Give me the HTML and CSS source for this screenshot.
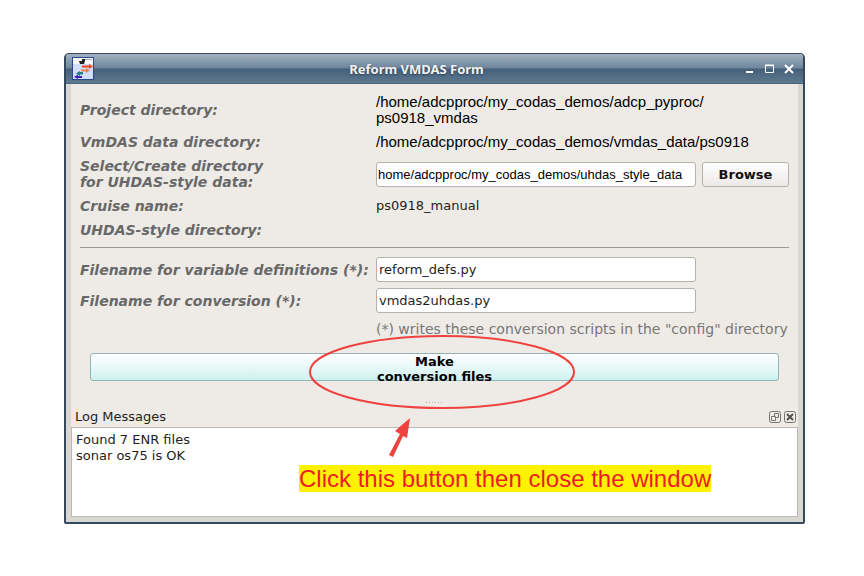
FILE: index.html
```html
<!DOCTYPE html>
<html lang="en">
<head>
    <meta charset="UTF-8">
    <meta name="viewport" content="width=device-width, initial-scale=1.0">
    <title>Reform VMDAS Form</title>
    <link rel="stylesheet" href="styles.css">
</head>
<body>
    <div class="window">
        <header class="titlebar">
            <svg class="app-icon" width="22" height="23" viewBox="0 0 22 23">
                <rect x="0.5" y="0.5" width="21" height="22" fill="#f8faff" stroke="#264c8c"/>
                <rect x="1" y="7" width="20" height="15" fill="#d3dcfb"/>
                <path d="M7 4h3V2h3v2l-1 3H8z" fill="#222"/>
                <path d="M13 2.500h7" stroke="#aaa"/>
                <path d="M10 8.500h7V7l4 2.500-4 2.500v-1.500h-7z" fill="#f8440c"/>
                <path d="M9 12.500h5V11l4 2.500-4 2.500v-1.500H9z" fill="#e8834e"/>
                <path d="M11 15H8v-1l-4 2.500 4 2.500v-1.500h3z" fill="#217f80"/>
                <path d="M10 19H6v-1.500L2 20l4 2v-1h4z" fill="#3d22b8"/>
            </svg>
            <h1 class="title">Reform VMDAS Form</h1>
            <div class="window-buttons">
                <button class="window-button" aria-label="Minimize">
                    <svg width="12" height="12" viewBox="0 0 12 12"><path d="M3 8h7v2H3z" fill="#fff"/></svg>
                </button>
                <button class="window-button" aria-label="Maximize">
                    <svg width="12" height="12" viewBox="0 0 12 12"><path d="M2.500 2.500h8v7h-8zM2 2h9" fill="none" stroke="#fff"/></svg>
                </button>
                <button class="window-button" aria-label="Close">
                    <svg width="12" height="12" viewBox="0 0 12 12"><path d="M2 2l8 8M10 2l-8 8" stroke="#fff" stroke-width="2"/></svg>
                </button>
            </div>
        </header>

        <main class="content">
            <div class="form">
                <span class="label">Project directory:</span>
                <span class="path">/home/adcpproc/my_codas_demos/adcp_pyproc/<br>ps0918_vmdas</span>

                <span class="label">VmDAS data directory:</span>
                <span class="path">/home/adcpproc/my_codas_demos/vmdas_data/ps0918</span>

                <label class="label" for="uhdasDir">Select/Create directory<br>for UHDAS-style data:</label>
                <input class="field field-path" type="text" id="uhdasDir" value="home/adcpproc/my_codas_demos/uhdas_style_data">
                <button class="browse">Browse</button>

                <span class="label">Cruise name:</span>
                <span class="value">ps0918_manual</span>

                <span class="label">UHDAS-style directory:</span>
            </div>

            <hr class="divider">

            <div class="form form-files">
                <label class="label" for="defsFile">Filename for variable definitions (*):</label>
                <input class="field" type="text" id="defsFile" value="reform_defs.py">

                <label class="label" for="convFile">Filename for conversion (*):</label>
                <input class="field" type="text" id="convFile" value="vmdas2uhdas.py">

                <span class="note">(*) writes these conversion scripts in the "config" directory</span>
            </div>

            <button class="make">Make<br>conversion files</button>
            <div class="grip"></div>
        </main>

        <section class="log">
            <div class="log-header">
                <label class="log-title" for="logText">Log Messages</label>
                <button class="dock-button" aria-label="Float">
                    <svg width="12" height="12" viewBox="0 0 12 12" fill="none" stroke="#77736e">
                        <rect x="0.5" y="0.5" width="11" height="11" rx="2"/>
                        <path d="M5.500 5V2.500h4v4H7M2.500 5.500h4v4h-4z"/>
                    </svg>
                </button>
                <button class="dock-button" aria-label="Close log">
                    <svg width="12" height="12" viewBox="0 0 12 12" fill="none" stroke="#77736e">
                        <rect x="0.5" y="0.5" width="11" height="11" rx="2"/>
                        <path d="M3 3l6 6M9 3l-6 6" stroke="#55514d" stroke-width="2"/>
                    </svg>
                </button>
            </div>
            <textarea class="log-text" id="logText" readonly>Found 7 ENR files
sonar os75 is OK</textarea>
        </section>

        <!-- red circle and arrow over the button -->
        <svg class="mark" width="270" height="126" viewBox="0 0 270 126">
            <ellipse cx="135" cy="38" rx="132" ry="36" fill="none" stroke="#ef413d" stroke-width="2"/>
            <path d="M103 84l-3 20-4-2-10 21-4-2 11-21-5-3z" fill="#ef413d"/>
        </svg>
        <p class="hint">Click this button then close the window</p>
    </div>
</body>
</html>
```
FILE: styles.css
```css
* {
    box-sizing: border-box;
}

body {
    margin: 0;
    padding: 53px 59px 52px 64px;
    background: #fff;
    color: #1e1e1e;
    font-family: "DejaVu Sans", sans-serif;
    font-size: 13px;
    line-height: 16px;
}

button {
    padding: 0;
    font-family: inherit;
    cursor: pointer;
}

.window {
    position: relative;
    border: 2px solid #34495d;
    border-top-width: 1px;
    border-radius: 5px 5px 2px 2px;
    background: #d9d7d1;
}

.titlebar {
    display: flex;
    align-items: center;
    height: 30px;
    padding: 0 8px 0 6px;
    background: linear-gradient(#a3b1bf, #6e869d 48%, #466079 52%, #5d7990);
    border-bottom: 1px solid #4a6584;
    border-radius: 3px 3px 0 0;
}

.title {
    flex: 1;
    margin: 0;
    padding-right: 4px;
    color: #f2f2f2;
    font-family: "Noto Sans", sans-serif;
    font-size: 13px;
    font-weight: bold;
    text-align: center;
    text-shadow: 0 1px 2px #2c4156;
}

.window-buttons {
    display: flex;
    gap: 8px;
}

.window-button,
.dock-button {
    display: flex;
    border: none;
    background: none;
}

.content {
    margin: 0 5px;
    padding: 10px 9px 4px;
    background: #eeebe7;
}

.form {
    display: grid;
    grid-template-columns: 290px minmax(0, 1fr) 87px;
    column-gap: 6px;
    row-gap: 8px;
    align-items: center;
}

.form-files {
    row-gap: 6px;
}

.label {
    grid-column: 1;
    color: #686868;
    font-size: 14px;
    font-style: italic;
    font-weight: bold;
    white-space: nowrap;
}

.path {
    grid-column: 2 / 4;
    color: #000;
    font-family: "Liberation Sans", Arial, sans-serif;
    font-size: 15px;
}

.field {
    grid-column: 2;
    width: 100%;
    height: 25px;
    padding: 0 2px;
    border: 1px solid #b5b1ac;
    border-radius: 3px;
    background: #fff;
    color: #1e1e1e;
    font-family: inherit;
    font-size: 13px;
}

.field-path {
    padding: 0 1px;
    color: #000;
    font-family: "Liberation Sans", Arial, sans-serif;
}

.browse {
    height: 25px;
    border: 1px solid #b5b1ac;
    border-radius: 3px;
    background: linear-gradient(#fff, #ebe9e7);
    color: #111;
    font-size: 13px;
    font-weight: bold;
}

.divider {
    height: 1px;
    margin: 9px 0;
    border: none;
    background: #999;
}

.note {
    grid-column: 2 / 4;
    color: #777;
    font-size: 14px;
    line-height: 20px;
    white-space: nowrap;
}

.make {
    display: block;
    width: calc(100% - 20px);
    height: 28px;
    margin: 14px 10px 0;
    padding-bottom: 4px;
    border: 1px solid #93b5b5;
    border-radius: 3px;
    background: linear-gradient(#fff, #cff1f1);
    color: #000;
    font-size: 13px;
    font-weight: bold;
    line-height: 15px;
}

.grip {
    width: 18px;
    height: 1px;
    margin: 21px auto 0;
    background: repeating-linear-gradient(90deg, #b5b2ae 0 1px, transparent 1px 3px);
}

.log {
    margin: 0 5px 5px;
}

.log-header {
    display: flex;
    align-items: center;
    gap: 3px;
    height: 20px;
    padding: 0 2px 0 4px;
    background: #eeebe7;
}

.log-title {
    flex: 1;
}

.log-text {
    display: block;
    width: 100%;
    height: 90px;
    padding: 4px;
    border: 1px solid #bdb9b4;
    background: #fff;
    color: #1e1e1e;
    font-family: inherit;
    font-size: 13px;
    line-height: 16px;
    resize: none;
}

.mark {
    position: absolute;
    top: 280px;
    left: 241px;
    pointer-events: none;
}

.hint {
    position: absolute;
    top: 411px;
    left: 233px;
    margin: 0;
    background: #fff200;
    color: #ed1c24;
    font-family: "Liberation Sans", Arial, sans-serif;
    font-size: 24px;
    line-height: 27px;
    white-space: nowrap;
}
```
